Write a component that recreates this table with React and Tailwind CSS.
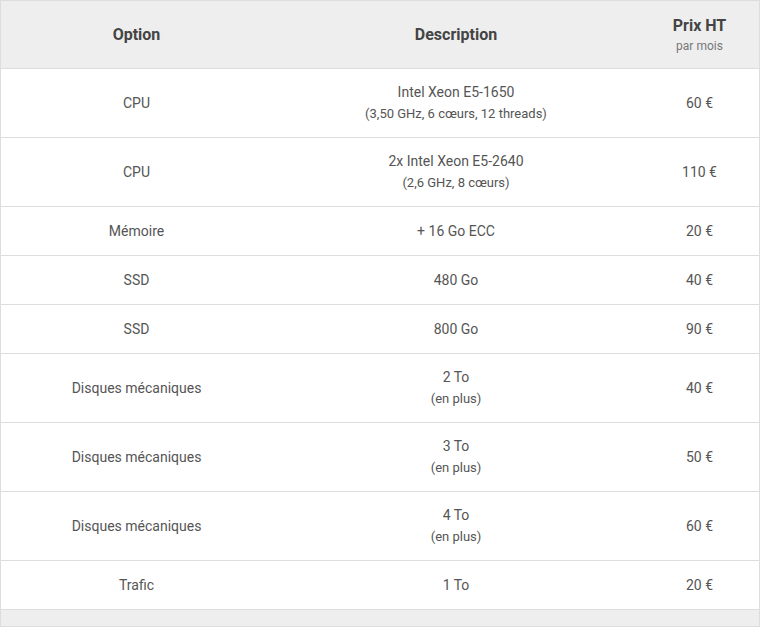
import React from "react";

const rows = [
  ["CPU", "Intel Xeon E5-1650", "(3,50 GHz, 6 cœurs, 12 threads)", "60 €"],
  ["CPU", "2x Intel Xeon E5-2640", "(2,6 GHz, 8 cœurs)", "110 €"],
  ["Mémoire", "+ 16 Go ECC", null, "20 €"],
  ["SSD", "480 Go", null, "40 €"],
  ["SSD", "800 Go", null, "90 €"],
  ["Disques mécaniques", "2 To", "(en plus)", "40 €"],
  ["Disques mécaniques", "3 To", "(en plus)", "50 €"],
  ["Disques mécaniques", "4 To", "(en plus)", "60 €"],
  ["Trafic", "1 To", null, "20 €"],
];

export default function App() {
  return (
    <div className="w-[760px] bg-white" style={{ fontFamily: "Roboto, 'Liberation Sans', sans-serif" }}>
      <div className="border border-[#dddddd] text-[#555555]">
        <div className="grid grid-cols-[271px_368px_1fr] bg-[#eeeeee] h-[68px] items-center text-center border-b border-[#dddddd]">
          <div className="text-[16px] font-bold text-[#444444]">Option</div>
          <div className="text-[16px] font-bold text-[#444444]">Description</div>
          <div className="flex flex-col items-center">
            <div className="text-[16px] font-bold text-[#444444] leading-[22px]">Prix HT</div>
            <div className="text-[12px] text-[#777777] leading-[18px]">par mois</div>
          </div>
        </div>
        {rows.map(([opt, d1, d2, price], i) => (
          <div
            key={i}
            className={`grid grid-cols-[271px_368px_1fr] items-center text-center border-b border-[#dddddd] ${d2 ? "h-[69px]" : "h-[49px]"}`}
          >
            <div className="text-[14px]">{opt}</div>
            <div className="flex flex-col items-center">
              <div className="text-[14px] leading-[21px]">{d1}</div>
              {d2 && <div className="text-[13px] leading-[21px]">{d2}</div>}
            </div>
            <div className="text-[14px]">{price}</div>
          </div>
        ))}
        <div className="h-[16px] bg-[#eeeeee]"></div>
      </div>
    </div>
  );
}
